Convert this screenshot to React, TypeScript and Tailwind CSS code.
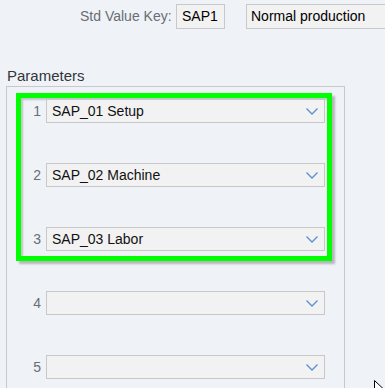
import React from 'react';

const font = { fontFamily: '"Liberation Sans", Arial, sans-serif' };

const Chevron = () => (
  <svg width="12" height="7" viewBox="0 0 12 7" className="shrink-0">
    <polyline points="0.5,0.5 6,6 11.5,0.5" fill="none" stroke="#5b8fd0" strokeWidth="1.3" />
  </svg>
);

const ParamRow = ({ num, value }: { num: number; value?: string }) => (
  <div className="flex items-center h-6">
    <span className="w-[22px] shrink-0 pr-[2px] text-right text-[14px] text-[#6a6d70]">{num}</span>
    <div className="ml-[3px] w-[279px] shrink-0 h-6 flex items-center justify-between bg-[#f2f2f2] border border-[#c8c8c8] pl-[5px] pr-[6px]">
      <span className="text-[14px] text-[#111] leading-none">{value}</span>
      <Chevron />
    </div>
  </div>
);

export default function App() {
  const rows = [
    { num: 1, value: 'SAP_01 Setup' },
    { num: 2, value: 'SAP_02 Machine' },
    { num: 3, value: 'SAP_03 Labor' },
  ];

  return (
    <div className="relative w-[385px] h-[388px] overflow-hidden bg-[#eff3f8]" style={font}>
      {/* header */}
      <div className="flex items-center pt-1 h-[29px]">
        <span className="ml-[80px] w-[89px] shrink-0 text-[14px] text-[#6a6d70] whitespace-nowrap">Std Value Key:</span>
        <div className="ml-[7px] w-[49px] shrink-0 h-[25px] flex items-center bg-[#f2f2f2] border border-[#c8c8c8] pl-[5px] text-[14px] text-black">
          SAP1
        </div>
        <div className="ml-[21px] w-[160px] shrink-0 h-[25px] flex items-center bg-[#f2f2f2] border border-[#c8c8c8] pl-[4px] text-[14px] text-black whitespace-nowrap">
          Normal production
        </div>
      </div>

      <div className="mt-[38px] ml-[7px] text-[15px] leading-[18px] text-[#32363a]">Parameters</div>

      {/* panel */}
      <div className="mt-[1px] ml-[6px] w-[339px] h-[320px] border border-[#c8c8c8]">
        <div className="mt-[6px] ml-[9px] w-[316px] border-[5px] border-[#00ff00] pt-[1px] pb-[5px] flex flex-col gap-10 shadow-[3px_3px_2px_rgba(0,0,0,0.25),inset_2px_2px_2px_rgba(0,0,0,0.2)]">
          {rows.map((r) => (
            <ParamRow key={r.num} num={r.num} value={r.value} />
          ))}
        </div>
        <div className="mt-[30px] ml-[14px] flex flex-col gap-10">
          <ParamRow num={4} />
          <ParamRow num={5} />
        </div>
      </div>

      {/* mouse cursor */}
      <svg className="absolute left-[374px] top-[380px]" width="10" height="14" viewBox="0 0 10 14">
        <path d="M0.5 0.5 L0.5 12 L3.5 9 L6 13.5 L7.5 12.8 L5.2 8.5 L9 8.5 Z" fill="#fff" stroke="#000" strokeWidth="1" />
      </svg>
    </div>
  );
}
